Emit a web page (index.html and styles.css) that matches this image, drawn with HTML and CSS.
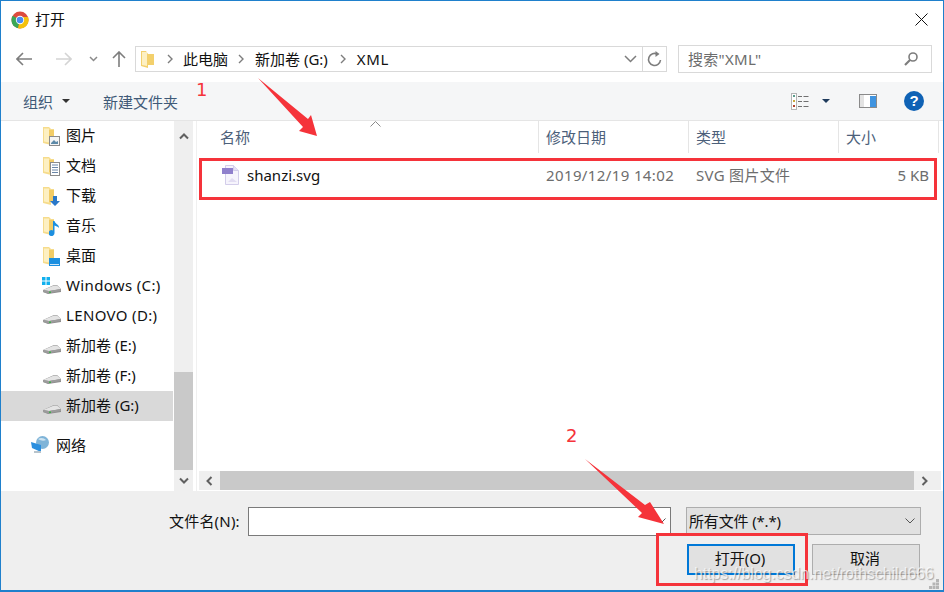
FILE: index.html
```html
<!DOCTYPE html>
<html lang="zh">
<head>
<meta charset="utf-8">
<title>打开</title>
<link rel="stylesheet" href="styles.css">
</head>
<body>
<svg class="defs" width="0" height="0" aria-hidden="true">
  <symbol id="folder" viewBox="0 0 18 20">
    <path d="M0 1h6l2 2h3v13H8v3l-8-2z" fill="#f6dc8c"/>
    <path d="M1 2.500h5v14l-5-1z" fill="#fdf0c2"/>
    <path d="M6 4h5v12H6z" fill="#f2cc66"/>
  </symbol>
  <symbol id="addrfolder" viewBox="0 0 13 18">
    <path d="M0 1h5l2 3h6v11H7v3l-7-2z" fill="#f3d06c"/>
    <path d="M1 2h5v14l-5-1z" fill="#fdf0c2"/>
  </symbol>
  <symbol id="drive" viewBox="0 0 18 10">
    <path d="M0 6L11 1h3l4 4v3L5 10 0 8z" fill="#8c8c8c"/>
    <path d="M0 6l11-4.400h3L18 5 6 7z" fill="#e4e4e4"/>
    <path d="M0 6l6 1 12-2v2L5 9.500 0 8z" fill="#9b9b9b"/>
    <rect x="6" y="7.500" width="2" height="1.500" fill="#3fae49"/>
  </symbol>
</svg>

<div class="window">
  <header class="titlebar">
    <svg class="chrome" width="18" height="18" viewBox="0 0 18 18">
      <circle cx="9" cy="9" r="8.500" fill="#dd4b3e"/>
      <path d="M9 9L1.600 4.800A8.500 8.500 0 0 0 7 17.300z" fill="#3aa757"/>
      <path d="M9 9l-2 8.300A8.500 8.500 0 0 0 17 6H9z" fill="#f4c20d"/>
      <circle cx="9" cy="9" r="4.200" fill="#fff"/>
      <circle cx="9" cy="9" r="3.300" fill="#4a8df0"/>
    </svg>
    <span class="title">打开</span>
    <svg class="close" width="13" height="13" viewBox="0 0 13 13"><path d="M.5.500l12 12M12.500.500l-12 12" stroke="#111" fill="none"/></svg>
  </header>

  <div class="addressrow">
    <svg class="nav-back" width="16" height="14" viewBox="0 0 16 14"><path d="M1 7h15M7 1L1 7l6 6" stroke="#7d7d7d" stroke-width="1.600" fill="none"/></svg>
    <svg class="nav-forward" width="16" height="14" viewBox="0 0 16 14"><path d="M0 7h15M9 1l6 6-6 6" stroke="#d4d4d4" stroke-width="1.600" fill="none"/></svg>
    <svg class="nav-drop" width="9" height="6" viewBox="0 0 9 6"><path d="M1 1l3.500 3.500L8 1" stroke="#8a8a8a" stroke-width="1.500" fill="none"/></svg>
    <svg class="nav-up" width="14" height="16" viewBox="0 0 14 16"><path d="M7 16V1M1 7l6-6 6 6" stroke="#7d7d7d" stroke-width="1.600" fill="none"/></svg>
    <div class="address">
      <svg class="addr-folder" width="13" height="18"><use href="#addrfolder"/></svg>
      <svg class="crumb-sep crumb-first" width="6" height="10" viewBox="0 0 6 10"><path d="M1 1l4 4-4 4" stroke="#7d7d7d" stroke-width="1.400" fill="none"/></svg><span class="crumb">此电脑</span>
      <svg class="crumb-sep crumb-second" width="6" height="10" viewBox="0 0 6 10"><path d="M1 1l4 4-4 4" stroke="#7d7d7d" stroke-width="1.400" fill="none"/></svg><span class="crumb">新加卷 (G:)</span>
      <svg class="crumb-sep crumb-third" width="6" height="10" viewBox="0 0 6 10"><path d="M1 1l4 4-4 4" stroke="#7d7d7d" stroke-width="1.400" fill="none"/></svg><span class="crumb crumb-xml">XML</span>
      <svg class="addr-drop" width="13" height="8" viewBox="0 0 13 8"><path d="M1 1l5.500 5.500L12 1" stroke="#7d7d7d" stroke-width="1.500" fill="none"/></svg>
      <span class="addr-refresh">
        <svg width="15" height="16" viewBox="0 0 15 16"><path d="M10.500 3.200A6 6 0 1 0 13.500 9" stroke="#7d7d7d" stroke-width="1.600" fill="none"/><path d="M8.500 0v6l4-3z" fill="#7d7d7d"/></svg>
      </span>
    </div>
    <div class="search">
      <span class="search-text">搜索"XML"</span>
      <svg width="14" height="14" viewBox="0 0 14 14"><circle cx="9" cy="5" r="4" stroke="#7d7d7d" stroke-width="1.600" fill="none"/><path d="M6 8l-5 5" stroke="#7d7d7d" stroke-width="2.200"/></svg>
    </div>
  </div>

  <div class="toolbar">
    <span class="tool">组织</span><span class="caret caret-org"></span>
    <span class="tool tool-new">新建文件夹</span>
    <svg class="views" width="18" height="17" viewBox="0 0 18 17">
      <rect x=".5" y=".5" width="5" height="16" fill="#fff" stroke="#b5b5b5"/>
      <rect x="2" y="2" width="2" height="2" fill="#5a9c8c"/><rect x="2" y="7" width="2" height="2" fill="#c8a83c"/><rect x="2" y="12" width="2" height="2" fill="#b0402c"/>
      <path d="M7 3.500h4M12.500 3.500h5M7 8.500h4M12.500 8.500h5M7 13.500h4M12.500 13.500h5" stroke="#707070"/>
    </svg>
    <span class="caret caret-views"></span>
    <svg class="pane" width="18" height="14" viewBox="0 0 18 14">
      <rect x=".5" y=".5" width="17" height="13" fill="#fff" stroke="#8a8a8a"/>
      <rect x="1" y="1" width="4" height="12" fill="#e3e3e3"/>
      <rect x="11" y="2" width="6" height="11" fill="#3f94e0"/>
    </svg>
    <svg class="help" width="20" height="20" viewBox="0 0 20 20">
      <circle cx="10" cy="10" r="10" fill="#0f62b5"/>
      <text x="10" y="15" text-anchor="middle" class="help-mark">?</text>
    </svg>
  </div>

  <main class="main">
    <nav class="sidebar">
      <ul class="tree">
        <li class="row"><span class="ico-wrap"><svg width="18" height="20"><use href="#folder"/></svg><svg class="badge" width="11" height="10" viewBox="0 0 11 10"><rect x=".5" y=".5" width="10" height="9" fill="#f4f4f4" stroke="#8b8b8b"/><path d="M2 7l3-3 2 2 2-1v3H2z" fill="#5d8aa8"/></svg></span>图片</li>
        <li class="row"><span class="ico-wrap"><svg width="18" height="20"><use href="#folder"/></svg><svg class="badge" width="10" height="14" viewBox="0 0 10 14"><rect x=".5" y=".5" width="9" height="13" fill="#fff" stroke="#8b8b8b"/><path d="M2 3h6M2 5.500h6M2 8h6M2 10.500h6" stroke="#6a86a8"/></svg></span>文档</li>
        <li class="row"><span class="ico-wrap"><svg width="18" height="20"><use href="#folder"/></svg><svg class="badge" width="10" height="10" viewBox="0 0 10 10"><path d="M3 0h4v5h3L5 10 0 5h3z" fill="#2a78c8"/></svg></span>下载</li>
        <li class="row"><span class="ico-wrap"><svg width="18" height="20"><use href="#folder"/></svg><svg class="badge" width="11" height="15" viewBox="0 0 11 15"><path d="M4 0h1.500c.5 3 5 3.500 4.500 7-1-1.500-3-2-4.500-2.500V12a3 3 0 1 1-1.500-2.500z" fill="#1c8fe0"/></svg></span>音乐</li>
        <li class="row"><span class="ico-wrap"><svg width="18" height="20"><use href="#folder"/></svg><svg class="badge" width="11" height="8" viewBox="0 0 11 8"><rect width="11" height="8" fill="#1c8fe0"/><rect x="1" y="6" width="9" height="1" fill="#cfe6f8"/></svg></span>桌面</li>
        <li class="row row-latin"><span class="ico-wrap"><svg class="drive-ico" width="18" height="10"><use href="#drive"/></svg><svg class="winlogo" width="8" height="8" viewBox="0 0 8 8"><path d="M0 0h3.500v3.500H0zM4.500 0H8v3.500H4.500zM0 4.500h3.500V8H0zM4.500 4.500H8V8H4.500z" fill="#11b0ee"/></svg></span>Windows (C:)</li>
        <li class="row row-latin"><span class="ico-wrap"><svg class="drive-ico" width="18" height="10"><use href="#drive"/></svg></span>LENOVO (D:)</li>
        <li class="row"><span class="ico-wrap"><svg class="drive-ico" width="18" height="10"><use href="#drive"/></svg></span>新加卷 (E:)</li>
        <li class="row"><span class="ico-wrap"><svg class="drive-ico" width="18" height="10"><use href="#drive"/></svg></span>新加卷 (F:)</li>
        <li class="row row-selected"><span class="ico-wrap"><svg class="drive-ico" width="18" height="10"><use href="#drive"/></svg></span>新加卷 (G:)</li>
        <li class="row row-net">
          <svg class="net-ico" width="19" height="19" viewBox="0 0 19 19"><circle cx="11.500" cy="6.500" r="6.500" fill="#7fb4d8"/><path d="M7 3c3-2 6-1 8 1-2 1-5 1-8-1z" fill="#cfe4f1"/><path d="M0 6l10 3v7L1 12z" fill="#2b8fdf"/><path d="M3 15h7v2H3z" fill="#b8c4cc"/></svg>
          网络
        </li>
      </ul>
    </nav>
    <div class="vscroll">
      <span class="sb-btn"><svg width="10" height="7" viewBox="0 0 10 7"><path d="M1 5.500l4-4 4 4" stroke="#606060" stroke-width="2" fill="none"/></svg></span>
      <span class="vtrack"></span>
      <span class="vthumb"></span>
      <span class="sb-btn sb-down"><svg width="10" height="7" viewBox="0 0 10 7"><path d="M1 1.500l4 4 4-4" stroke="#606060" stroke-width="2" fill="none"/></svg></span>
    </div>
    <section class="list">
      <div class="headers">
        <span class="col col-name">名称<svg class="sort" width="11" height="6" viewBox="0 0 11 6"><path d="M.5 5.500l5-5 5 5" stroke="#8a8a8a" fill="none"/></svg></span>
        <span class="col">修改日期</span>
        <span class="col">类型</span>
        <span class="col">大小</span>
      </div>
      <div class="file">
        <span class="cell-name">
          <svg class="file-ico" width="17" height="20" viewBox="0 0 17 20">
            <path d="M3.500.500h8l5 5v14h-13z" fill="#f6f4fc" stroke="#d3cdea"/>
            <path d="M11.500.500v5h5" fill="#e6e1f4" stroke="#d3cdea"/>
            <rect y="3" width="11" height="6" fill="#8f80cc"/>
            <path d="M6 17l4-4 5 4z" fill="#e2ddf2"/>
          </svg>
          shanzi.svg
        </span>
        <span class="cell cell-date">2019/12/19 14:02</span>
        <span class="cell cell-type">SVG 图片文件</span>
        <span class="cell cell-size">5 KB</span>
      </div>
      <div class="hscroll">
        <span class="sb-btn sb-h"><svg width="7" height="10" viewBox="0 0 7 10"><path d="M5.500 1l-4 4 4 4" stroke="#606060" stroke-width="2" fill="none"/></svg></span>
        <span class="hthumb"></span>
        <span class="sb-btn sb-h"><svg width="7" height="10" viewBox="0 0 7 10"><path d="M1.500 1l4 4-4 4" stroke="#606060" stroke-width="2" fill="none"/></svg></span>
      </div>
    </section>
  </main>

  <footer class="footer">
    <div class="form-row">
      <label class="fname-label">文件名(N):</label>
      <div class="fname-input"><svg width="10" height="6" viewBox="0 0 10 6"><path d="M.5.500L5 5 9.500.500" stroke="#555" fill="none"/></svg></div>
      <div class="filter"><span class="filter-text">所有文件 (*.*)</span><svg width="10" height="6" viewBox="0 0 10 6"><path d="M.5.500L5 5 9.500.500" stroke="#555" fill="none"/></svg></div>
    </div>
    <div class="button-row">
      <button class="btn btn-primary">打开(O)</button>
      <button class="btn">取消</button>
    </div>
    <svg class="grip" width="10" height="10" viewBox="0 0 10 10"><path d="M7 0h3v3H7zM3.500 3.500h3v3h-3zM7 3.500h3v3H7zM0 7h3v3H0zM3.500 7h3v3h-3zM7 7h3v3H7z" fill="#b5b5b5"/></svg>
  </footer>

  <div class="mark mark-file"></div>
  <div class="mark mark-open"></div>
  <span class="mark-num num-1">1</span>
  <span class="mark-num num-2">2</span>
  <svg class="arrows" width="944" height="592" viewBox="0 0 944 592">
    <path d="M258 78L308 119 311 115 317 136 299 131 303 127z" fill="#f5333a"/>
    <path d="M585 459L645 505 650 502 664 524 638 517 642 513z" fill="#f5333a"/>
  </svg>
  <span class="watermark">https://blog.csdn.net/rothschild666</span>
</div>
</body>
</html>
```

FILE: styles.css
```css
* { box-sizing: border-box; }
html, body { margin: 0; padding: 0; }
body {
  width: 944px;
  height: 592px;
  overflow: hidden;
  background: #fff;
  font-family: "Noto Sans", "Noto Sans CJK SC", sans-serif;
  font-size: 15px;
  color: #111;
}
.defs { position: absolute; }

.window {
  position: relative;
  width: 944px;
  height: 592px;
  display: flex;
  flex-direction: column;
  border: 1px solid #1f80cc;
  border-bottom-width: 2px;
  background: #fff;
}

/* title bar */
.titlebar {
  height: 37px;
  flex: none;
  display: flex;
  align-items: center;
  padding-left: 10px;
  padding-right: 15px;
}
.title { margin-left: 6px; line-height: 18px; margin-bottom: 2px; }
.close { margin-left: auto; }

/* address row */
.addressrow {
  height: 44px;
  flex: none;
  display: flex;
  align-items: center;
  padding-bottom: 3px;
}
.nav-back { margin-left: 15px; }
.nav-forward { margin-left: 24px; }
.nav-drop { margin-left: 17px; }
.nav-up { margin-left: 14px; }
.address {
  margin-left: 9px;
  width: 532px;
  height: 26px;
  border: 1px solid #d9d9d9;
  display: flex;
  align-items: center;
  padding-left: 5px;
  background: #fff;
}
.addr-folder { flex: none; }
.crumb-sep { flex: none; margin: 0 10px; }
.crumb-first { margin: 0 10px 0 13px; }
.crumb-second { margin: 0 11px 0 10px; }
.crumb-third { margin: 0 11px 0 12px; }
.crumb { line-height: 20px; }
.crumb-xml { letter-spacing: .6px; }
.addr-drop { margin-left: auto; margin-right: 5px; }
.addr-refresh {
  width: 24px;
  height: 24px;
  border-left: 1px solid #d9d9d9;
  display: flex;
  align-items: center;
  justify-content: center;
}
.search {
  margin-left: 11px;
  width: 254px;
  height: 28px;
  border: 1px solid #d9d9d9;
  display: flex;
  align-items: center;
  justify-content: space-between;
  padding: 0 13px 0 9px;
}
.search-text { color: #6d6d6d; letter-spacing: .3px; }

/* toolbar */
.toolbar {
  height: 39px;
  flex: none;
  background: #f5f6f7;
  border-bottom: 1px solid #e5e5e5;
  display: flex;
  align-items: center;
  padding-left: 22px;
}
.tool { color: #3f5a78; }
.tool-new { margin-left: 33px; }
.caret { width: 0; height: 0; border: 4px solid transparent; border-top: 4px solid #1e3a5c; border-bottom: 0; }
.caret-org { margin-left: 9px; border-top-color: #333; }
.views { margin-left: 613px; }
.caret-views { margin-left: 13px; }
.pane { margin-left: 29px; }
.help { margin-left: 27px; }
.help-mark { font: 700 15px "Liberation Sans", sans-serif; fill: #fff; }

/* main */
.main {
  height: 370px;
  flex: none;
  display: flex;
}
.sidebar { width: 173px; flex: none; }
.tree { list-style: none; margin: 0; padding: 0; }
.row {
  height: 30px;
  display: flex;
  align-items: center;
  padding: 0 0 1px 41px;
  white-space: nowrap;
  line-height: 29px;
}
.row-latin { letter-spacing: .35px; }
.row-selected { background: #d9d9d9; margin-right: 1px; }
.row-net { margin-top: 10px; padding-left: 30px; }
.net-ico { margin-right: 6px; flex: none; }
.ico-wrap {
  position: relative;
  width: 24px;
  height: 20px;
  flex: none;
  display: flex;
  align-items: center;
  margin-left: 1px;
  margin-right: -1px;
}
.drive-ico { margin-top: 7px; }
.badge { position: absolute; right: 7px; bottom: 0; }
.winlogo { position: absolute; left: -1px; top: 1px; }

.vscroll {
  width: 19px;
  flex: none;
  background: #efefef;
  display: flex;
  flex-direction: column;
}
.sb-btn { flex: none; display: flex; align-items: center; justify-content: center; height: 30px; }
.sb-down { height: 21px; }
.vtrack { flex: 1; }
.vthumb { height: 98px; flex: none; background: #c9c9c9; }

.list {
  flex: 1;
  margin-left: 3px;
  border-left: 1px solid #f0f0f0;
  display: flex;
  flex-direction: column;
  min-width: 0;
}
.headers {
  height: 32px;
  flex: none;
  display: grid;
  grid-template-columns: 342px 150px 150px 100px;
}
.col {
  position: relative;
  color: #4c607a;
  padding-left: 7px;
  line-height: 32px;
  border-right: 1px solid #e5e5e5;
}
.col-name { padding-left: 23px; }
.sort { position: absolute; left: 173px; top: 0; }
.file {
  margin-top: 7px;
  height: 30px;
  flex: none;
  display: grid;
  grid-template-columns: 342px 150px 150px 90px;
  align-items: center;
  color: #6d6d6d;
  line-height: 20px;
}
.cell-name { display: flex; align-items: center; padding-left: 25px; color: #111; }
.file-ico { margin-right: 8px; }
.cell { padding-left: 7px; }
.cell-date { letter-spacing: .38px; white-space: nowrap; }
.cell-type { letter-spacing: .3px; white-space: nowrap; }
.cell-size { text-align: right; padding-left: 0; }
.hscroll {
  margin-top: auto;
  height: 19px;
  flex: none;
  margin-left: 2px;
  margin-right: 2px;
  margin-bottom: 1px;
  background: #efefef;
  display: flex;
}
.sb-h { width: 21px; height: 19px; }
.hthumb { flex: none; width: 694px; background: #c9c9c9; }

/* footer */
.footer {
  flex: 1;
  position: relative;
  background: #efefef;
  padding-top: 16px;
}
.form-row { display: flex; align-items: center; height: 28px; line-height: 20px; }
.fname-label { margin-left: 168px; width: 79px; white-space: nowrap; letter-spacing: .2px; margin-bottom: 1px; }
.fname-input {
  width: 423px;
  height: 29px;
  background: #fff;
  border: 1px solid #7a7a7a;
  display: flex;
  align-items: center;
  justify-content: flex-end;
  padding-right: 4px;
}
.filter {
  margin-left: 15px;
  width: 235px;
  height: 28px;
  background: #e1e1e1;
  border: 1px solid #adadad;
  display: flex;
  align-items: center;
  justify-content: space-between;
  padding: 0 5px 0 2px;
}
.filter-text { letter-spacing: -.15px; margin-bottom: 1px; }
.button-row {
  display: flex;
  gap: 17px;
  margin-top: 9px;
  margin-left: 686px;
}
.btn {
  width: 108px;
  height: 31px;
  padding: 0 2px 5px 0;
  background: #e1e1e1;
  border: 1px solid #adadad;
  font: inherit;
  color: #111;
}
.btn-primary { border: 2px solid #0078d7; }
.grip { position: absolute; right: 4px; bottom: 1px; }

/* annotations */
.mark { position: absolute; border: 3px solid #f5333a; pointer-events: none; }
.mark-file { left: 198px; top: 157px; width: 738px; height: 42px; }
.mark-open { left: 655px; top: 532px; width: 152px; height: 53px; }
.mark-num {
  position: absolute;
  color: #f5333a;
  font: 18px/20px "DejaVu Sans", sans-serif;
}
.num-1 { left: 195px; top: 79px; }
.num-2 { left: 565px; top: 425px; }
.arrows { position: absolute; left: -1px; top: -1px; pointer-events: none; }
.watermark {
  position: absolute;
  left: 693px;
  top: 563px;
  color: rgba(255, 255, 255, .7);
  text-shadow: 1px 1px 1px rgba(90, 90, 90, .5);
  font: 15.800px/20px "Liberation Sans", sans-serif;
  white-space: nowrap;
}
```
